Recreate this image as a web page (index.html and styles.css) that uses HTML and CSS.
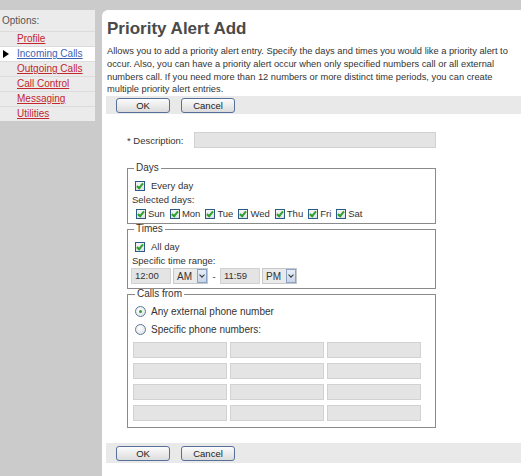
FILE: index.html
```html
<!DOCTYPE html>
<html lang="en">
<head>
    <meta charset="UTF-8">
    <title>Priority Alert Add</title>
    <link rel="stylesheet" href="styles.css">
</head>
<body>
    <div class="page">
        <nav class="side">
            <div class="side-head">Options:</div>
            <a class="side-item" href="#">Profile</a>
            <a class="side-item active" href="#">Incoming Calls</a>
            <a class="side-item" href="#">Outgoing Calls</a>
            <a class="side-item" href="#">Call Control</a>
            <a class="side-item" href="#">Messaging</a>
            <a class="side-item" href="#">Utilities</a>
        </nav>

        <main class="panel">
            <h1>Priority Alert Add</h1>
            <p class="intro">Allows you to add a priority alert entry. Specify the days and times you would like a priority alert to occur. Also, you can have a priority alert occur when only specified numbers call or all external numbers call. If you need more than 12 numbers or more distinct time periods, you can create multiple priority alert entries.</p>

            <div class="btn-bar">
                <button class="btn">OK</button>
                <button class="btn">Cancel</button>
            </div>

            <div class="desc-row">
                <label class="desc-label">* Description:</label>
                <span class="txt desc-input"></span>
            </div>

            <fieldset class="group days">
                <legend>Days</legend>
                <div class="check-row"><span class="chk"></span>Every day</div>
                <div class="sub-label">Selected days:</div>
                <div class="day-list">
                    <span class="day"><span class="chk"></span>Sun</span>
                    <span class="day"><span class="chk"></span>Mon</span>
                    <span class="day"><span class="chk"></span>Tue</span>
                    <span class="day"><span class="chk"></span>Wed</span>
                    <span class="day"><span class="chk"></span>Thu</span>
                    <span class="day"><span class="chk"></span>Fri</span>
                    <span class="day"><span class="chk"></span>Sat</span>
                </div>
            </fieldset>

            <fieldset class="group times">
                <legend>Times</legend>
                <div class="check-row"><span class="chk"></span>All day</div>
                <div class="sub-label">Specific time range:</div>
                <div class="time-row">
                    <span class="txt time-input">12:00</span>
                    <span class="sel">AM<span class="sel-btn"></span></span>
                    <span class="dash">-</span>
                    <span class="txt time-input">11:59</span>
                    <span class="sel">PM<span class="sel-btn"></span></span>
                </div>
            </fieldset>

            <fieldset class="group calls">
                <legend>Calls from</legend>
                <div class="radio-row"><span class="radio on"></span>Any external phone number</div>
                <div class="radio-row second"><span class="radio"></span>Specific phone numbers:</div>
                <div class="num-grid">
                    <span class="txt"></span><span class="txt"></span><span class="txt"></span>
                    <span class="txt"></span><span class="txt"></span><span class="txt"></span>
                    <span class="txt"></span><span class="txt"></span><span class="txt"></span>
                    <span class="txt"></span><span class="txt"></span><span class="txt"></span>
                </div>
            </fieldset>

            <div class="btn-bar bottom">
                <button class="btn">OK</button>
                <button class="btn">Cancel</button>
            </div>
        </main>
    </div>
</body>
</html>
```

FILE: styles.css
```css
/* Base layout */
body {
    margin: 0;
    background: #cbcbcb;
    font-family: "Liberation Sans", Arial, sans-serif;
    font-size: 9.5px;
    color: #333;
}
.page {
    display: flex;
    align-items: flex-start;
    padding-top: 10px;
}

/* Side menu */
.side {
    width: 95px;
    flex: none;
    background: #ebebeb;
    font-size: 10px;
}
.side-head {
    height: 21px;
    line-height: 21px;
    padding-left: 2px;
    color: #555;
}
.side-item {
    display: block;
    height: 14px;
    line-height: 14px;
    border-top: 1px solid #dcdcdc;
    padding-left: 17px;
    color: #c2262e;
    position: relative;
}
.side-item.active {
    background: #fff;
    color: #3a62b5;
}
.side-item.active::before {
    content: "";
    position: absolute;
    left: 3px;
    top: 3px;
    border-left: 6px solid #000;
    border-top: 4px solid transparent;
    border-bottom: 4px solid transparent;
}

/* Main panel */
.panel {
    flex: 1;
    margin-left: 7px;
    min-height: 466px;
    background: #fff;
    border-top-left-radius: 6px;
    padding-left: 4px;
}
h1 {
    margin: 9px 0 0 1px;
    font-size: 17px;
    line-height: 20px;
    color: #4a4a4a;
}
.intro {
    margin: 6px 12px 0 1px;
    font-size: 9.3px;
    line-height: 12.75px;
}
.btn-bar {
    display: flex;
    gap: 11px;
    height: 18px;
    align-items: center;
    padding-left: 10px;
    background: #e9e9e9;
}
.btn-bar.bottom {
    height: 20px;
    margin-top: 15px;
}
.btn {
    width: 54px;
    height: 15px;
    padding: 0;
    border: 1px solid #55709b;
    border-radius: 3px;
    background: linear-gradient(#fbfbfb, #dcdcdc);
    font-family: inherit;
    font-size: 9.5px;
    color: #222;
}

/* Form */
.desc-row {
    display: flex;
    align-items: center;
    margin: 18px 0 0 21px;
}
.desc-label {
    width: 67px;
}
.txt {
    display: block;
    box-sizing: border-box;
    height: 16px;
    line-height: 14px;
    padding-left: 3px;
    background: #e4e4e4;
    border: 1px solid #d2d2d2;
}
.desc-input {
    width: 242px;
}
.group {
    width: 309px;
    box-sizing: border-box;
    margin: 0 0 0 21px;
    padding: 6px 4px 3px 4px;
    border: 1px solid #8a8a8a;
}
.group.days {
    margin-top: 15px;
}
legend {
    padding: 0 2px;
    margin-left: 2px;
    font-size: 10px;
    line-height: 10px;
    color: #333;
}
.check-row {
    display: flex;
    align-items: center;
    gap: 6px;
    height: 13px;
    padding-left: 3px;
}
.sub-label {
    height: 15px;
    line-height: 15px;
}
.day-list {
    display: flex;
    gap: 5px;
    height: 13px;
    align-items: center;
    padding-left: 4px;
}
.day {
    display: flex;
    align-items: center;
    gap: 2px;
}
.chk {
    width: 8px;
    height: 8px;
    border: 1px solid #2a5a85;
    background: linear-gradient(#f4f4f4, #dfe4e8);
    position: relative;
}
.chk::after {
    content: "";
    position: absolute;
    left: 2px;
    top: 0;
    width: 2px;
    height: 5px;
    border-right: 2px solid #2da02d;
    border-bottom: 2px solid #2da02d;
    transform: rotate(40deg);
}

/* Time range */
.group.times {
    padding-bottom: 4px;
}
.time-row {
    display: flex;
    align-items: center;
    margin-left: -1px;
}
.time-input {
    width: 40px;
}
.sel {
    display: flex;
    align-items: center;
    box-sizing: border-box;
    width: 35px;
    height: 16px;
    margin-left: 2px;
    padding-left: 3px;
    background: #eaeaea;
    border: 1px solid #c8c8c8;
    font-size: 10px;
}
.sel-btn {
    margin-left: auto;
    width: 10px;
    height: 14px;
    box-sizing: border-box;
    border: 1px solid #8aa4c8;
    background: linear-gradient(#e8eef7, #c9d6ea);
    position: relative;
}
.sel-btn::after {
    content: "";
    position: absolute;
    left: 2px;
    top: 3px;
    width: 3px;
    height: 3px;
    border-right: 1.5px solid #333;
    border-bottom: 1.5px solid #333;
    transform: rotate(45deg);
}
.dash {
    width: 10px;
    text-align: center;
    margin: 0 1px;
}

/* Calls from */
.group.calls {
    padding: 5px 4px 6px 5px;
}
.radio-row {
    display: flex;
    align-items: center;
    gap: 5px;
    height: 14px;
    padding-left: 2px;
    font-size: 10px;
}
.radio-row.second {
    margin-top: 4px;
}
.radio {
    width: 9px;
    height: 9px;
    border-radius: 50%;
    border: 1px solid #5d7899;
    background: radial-gradient(circle at 40% 35%, #fff, #d8dde4);
    position: relative;
}
.radio.on::after {
    content: "";
    position: absolute;
    left: 3px;
    top: 3px;
    width: 3px;
    height: 3px;
    border-radius: 50%;
    background: #2da02d;
}
.num-grid {
    display: grid;
    grid-template-columns: repeat(3, 94px);
    column-gap: 3px;
    row-gap: 5px;
    margin-top: 6px;
}
```
